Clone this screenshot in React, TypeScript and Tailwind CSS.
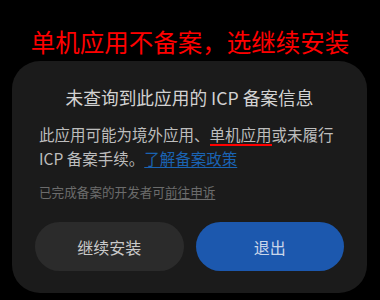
import React from "react";

export default function App() {
  const font = { fontFamily: '"Noto Sans CJK SC", "Noto Sans", sans-serif' };
  return (
    <div
      className="w-[380px] h-[300px] bg-black flex flex-col overflow-hidden"
      style={font}
    >
      <div className="pt-[26px] h-[58px] flex justify-center">
        <span className="text-[24.5px] leading-[32px] text-[#ff0000]">
          单机应用不备案，选继续安装
        </span>
      </div>
      <div className="mt-[3px] ml-[12px] w-[355px] rounded-[28px] bg-[#1b1b1b] pt-[24px] pb-[22px] px-[23px] flex flex-col">
        <div className="text-center text-[17.7px] leading-[24px] text-[#d2d2d2]">
          未查询到此应用的 ICP 备案信息
        </div>
        <div className="mt-[13px] px-[4px] text-[15.5px] leading-[24px] text-[#bdbdbd]">
          此应用可能为境外应用、
          <span className="relative">
            单机应用
            <span className="absolute left-0 right-0 bottom-[-1px] h-[2px] bg-[#ff0000]" />
          </span>
          或未履行 ICP 备案手续。
          <span className="text-[#1a63b3] underline underline-offset-2">
            了解备案政策
          </span>
        </div>
        <div className="mt-[13px] px-[4px] text-[12.6px] leading-[18px] text-[#6c6c6c]">
          已完成备案的开发者可
          <span className="underline underline-offset-2">前往申诉</span>
        </div>
        <div className="mt-[21px] flex gap-[12px]">
          <div className="flex-1 h-[49px] rounded-full bg-[#2b2b2b] flex items-center justify-center text-[16px] text-[#c9c9c9]">
            继续安装
          </div>
          <div className="flex-1 h-[49px] rounded-full bg-[#1c58ae] flex items-center justify-center text-[16px] text-[#c9d6ea]">
            退出
          </div>
        </div>
      </div>
    </div>
  );
}
